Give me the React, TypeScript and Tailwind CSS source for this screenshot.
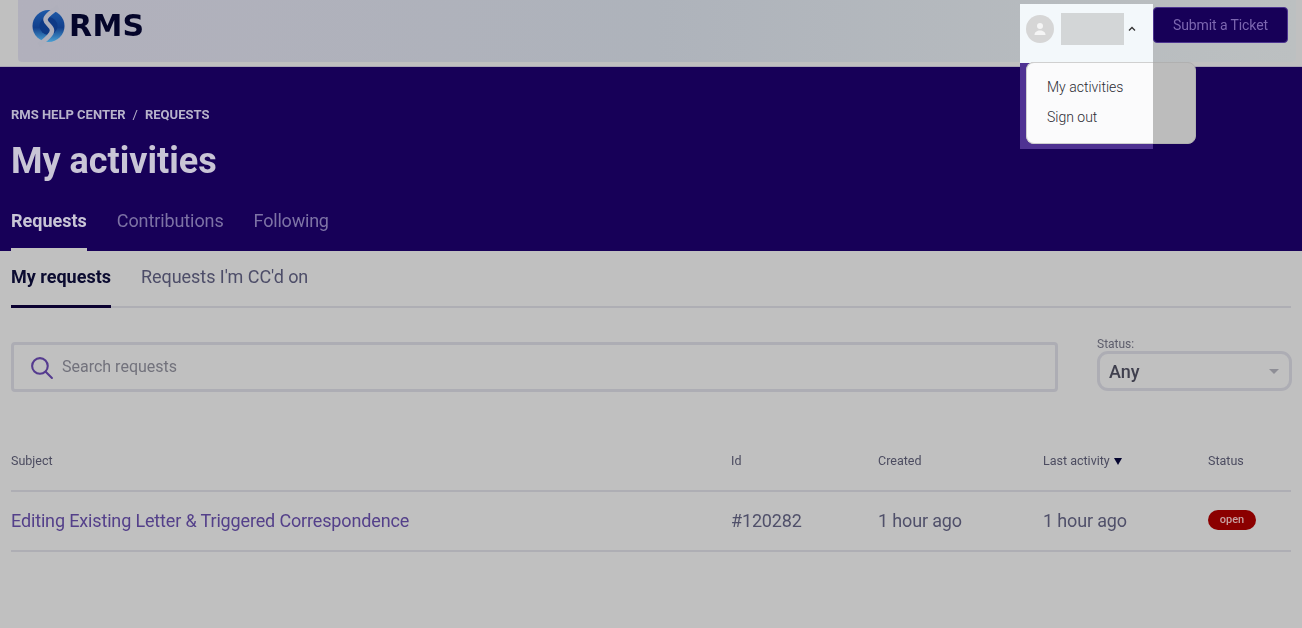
import React from "react";

function Logo() {
  return (
    <svg width="34" height="42" viewBox="0 0 34 42" className="shrink-0">
      <defs>
        <linearGradient id="lg" x1="0" y1="0" x2="0" y2="1">
          <stop offset="0" stopColor="#1e5aa8" />
          <stop offset="0.55" stopColor="#123f8c" />
          <stop offset="1" stopColor="#4a9fd2" />
        </linearGradient>
      </defs>
      <circle cx="16.500" cy="21" r="16" fill="url(#lg)" />
      <circle cx="16.500" cy="21" r="9" fill="#0f3a86" />
      <path d="M26 2 C20 7 13 11 13.500 15 C14 19 20 21 20 25.500 C20 30 13 35 7 40" fill="none" stroke="#afafbb" strokeWidth="4.500" />
    </svg>
  );
}

export default function App() {
  return (
    <div className="relative h-[628px] w-[1302px] overflow-hidden bg-[#c0c0c0] font-['Roboto',sans-serif]">
      <div className="blur-[0.7px]">
        <header className="h-[67px] border-b border-[#a9a5b5] pl-[18px] pr-[6px]">
          <div className="flex h-[62px] items-start justify-between rounded-b-[4px] bg-gradient-to-r from-[#b1b0bc] via-[#aeb3bb] to-[#bcc0c1] pl-[14px] pr-[8px]">
            <div className="mt-[4px] flex items-center">
              <Logo />
              <span className="ml-[3px] mt-[1px] font-['DejaVu_Sans',sans-serif] text-[30px] font-bold leading-[42px] tracking-[0.3px] text-[#04052a]">RMS</span>
            </div>
            <button className="mt-[7px] h-[36px] w-[135px] rounded-[4px] border border-[#4c3490] bg-[#170058] text-[14px] tracking-[-0.1px] text-[#7c66b0]">Submit a Ticket</button>
          </div>
        </header>
        <section className="h-[184px] bg-[#170058] pl-[11px]">
          <div className="flex pt-[41px] text-[13px] font-bold leading-[14px] text-[#b8b3cb]">
            <span>RMS HELP CENTER</span>
            <span className="mx-[7px] font-normal">/</span>
            <span>REQUESTS</span>
          </div>
          <h1 className="mt-[19px] text-[36px] font-bold leading-[40px] text-[#c9c5d6]">My activities</h1>
          <nav className="mt-[28px] flex gap-[30px] text-[18px] leading-[24px]">
            <a className="h-[42px] border-b-[3px] border-[#c0c0c0] font-bold text-[#c9c5d6]">Requests</a>
            <a className="tracking-[-0.1px] text-[#7d72a5]">Contributions</a>
            <a className="tracking-[-0.2px] text-[#7d72a5]">Following</a>
          </nav>
        </section>
        <main className="pl-[11px] pr-[11px]">
          <nav className="flex h-[57px] gap-[30px] border-b-2 border-[#aeaeb4] pt-[14px] text-[18px] leading-[24px]">
            <a className="mb-[-2px] h-[43px] border-b-[3px] border-[#0a0030] font-bold text-[#0b0b30]">My requests</a>
            <a className="tracking-[-0.05px] text-[#4d4d68]">Requests I'm CC'd on</a>
          </nav>
          <div className="mt-[29px] flex items-end justify-between">
            <div className="mb-[-1px] flex h-[50px] w-[1047px] items-center rounded-[4px] border-[3px] border-[#adadb4] pl-[15px]">
              <svg width="25" height="25" viewBox="0 0 24 24" fill="none" stroke="#553b8f" strokeWidth="2" strokeLinecap="round" className="shrink-0">
                <circle cx="10.500" cy="10.500" r="7.500" />
                <path d="M16 16l6 6" />
              </svg>
              <span className="ml-[8px] text-[16px] text-[#72727c]">Search requests</span>
            </div>
            <div className="mr-[-1px] w-[195px]">
              <div className="text-[12px] leading-[14px] text-[#5e5e6c]">Status:</div>
              <div className="flex h-[40px] items-center justify-between rounded-[11px] border-[3px] border-[#adadb4] pl-[9px] pr-[10px]">
                <span className="text-[18px] font-medium text-[#40404e]">Any</span>
                <span className="h-0 w-0 border-x-[5px] border-t-[5px] border-x-transparent border-t-[#8e8e96]" />
              </div>
            </div>
          </div>
          <div className="mt-[63px] flex h-[38px] items-start border-b-2 border-[#aeaeb4] text-[12.500px] leading-[14px] text-[#4c4c60]">
            <div className="w-[720px]">Subject</div>
            <div className="w-[147px]">Id</div>
            <div className="w-[165px]">Created</div>
            <div className="flex w-[165px] items-center">
              Last activity
              <span className="ml-[4px] h-0 w-0 border-x-[4px] border-t-[7px] border-x-transparent border-t-[#050530]" />
            </div>
            <div>Status</div>
          </div>
          <div className="flex h-[60px] items-center border-b-2 border-[#aeaeb4] pb-[2px] text-[18px] tracking-[-0.15px] text-[#50506a]">
            <div className="w-[720px] text-[#54408a]">Editing Existing Letter &amp; Triggered Correspondence</div>
            <div className="w-[147px]">#120282</div>
            <div className="w-[165px]">1 hour ago</div>
            <div className="w-[165px]">1 hour ago</div>
            <span className="flex h-[20px] w-[48px] items-center justify-center rounded-full bg-[#8b0000] text-[11px] font-medium tracking-normal text-[#c9a0a0]">open</span>
          </div>
        </main>
      </div>

      <div className="absolute left-[1020px] top-[4px] h-[59px] w-[133px] bg-[#f3f8fb]">
        <div className="flex items-center pl-[6px] pt-[9px]">
          <span className="flex h-[28px] w-[28px] items-center justify-center rounded-full bg-[#d6d6d6]">
            <svg width="16" height="16" viewBox="0 0 16 16" fill="#f5f5f5">
              <circle cx="8" cy="5" r="3" />
              <path d="M2.500 14c0-3 2.500-4.500 5.500-4.500s5.500 1.500 5.500 4.500z" />
            </svg>
          </span>
          <span className="ml-[7px] h-[32px] w-[63px] bg-[#d3d6d7]" />
          <svg width="10" height="8" viewBox="0 0 10 8" fill="none" stroke="#333" strokeWidth="1.300" className="ml-[3px]">
            <path d="M2 5.500 L5 2.500 L8 5.500" />
          </svg>
        </div>
      </div>
      <div className="absolute left-[1020px] top-[63px] h-[86px] w-[133px] bg-[#4f3292]" />
      <div className="absolute left-[1026px] top-[62px] h-[82px] w-[170px] rounded-[8px] border border-[#b0b0b0] bg-[#bcbcbc]" />
      <div className="absolute left-[1026px] top-[62px] flex h-[82px] w-[127px] flex-col rounded-l-[8px] border-y border-l border-[#d0d0d0] bg-[#fbfbfc] pl-[20px] pt-[9px] text-[14px] font-light leading-[30px] text-[#2b2b33]">
        <span>My activities</span>
        <span>Sign out</span>
      </div>
    </div>
  );
}
